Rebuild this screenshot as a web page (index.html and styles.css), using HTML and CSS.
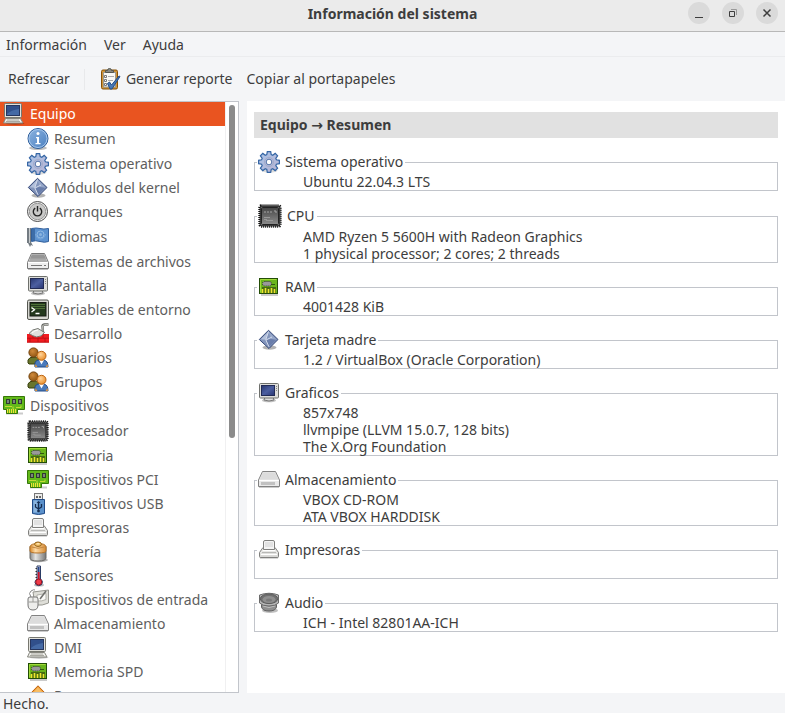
FILE: index.html
```html
<!DOCTYPE html>
<html lang="es">
<head>
<meta charset="utf-8">
<meta name="viewport" content="width=device-width, initial-scale=1">
<title>Información del sistema</title>
<link rel="stylesheet" href="styles.css">
</head>
<body>
<svg class="defs" aria-hidden="true">
  <defs>
    <linearGradient id="g-blue" x1="0" y1="0" x2="1" y2="1"><stop offset="0" stop-color="#8db4e0"/><stop offset="1" stop-color="#4a7fc0"/></linearGradient>
    <linearGradient id="g-navy" x1="0" y1="0" x2="1" y2="1"><stop offset="0" stop-color="#27366f"/><stop offset=".5" stop-color="#4c5fa0"/><stop offset="1" stop-color="#283572"/></linearGradient>
    <linearGradient id="g-grey" x1="0" y1="0" x2="0" y2="1"><stop offset="0" stop-color="#f4f4f2"/><stop offset="1" stop-color="#d4d4d2"/></linearGradient>
    <linearGradient id="g-steel" x1="0" y1="0" x2="1" y2="0"><stop offset="0" stop-color="#8a8a88"/><stop offset=".35" stop-color="#e4e4e2"/><stop offset="1" stop-color="#777"/></linearGradient>
    <linearGradient id="g-cap" x1="0" y1="0" x2="1" y2="0"><stop offset="0" stop-color="#d98a2c"/><stop offset=".35" stop-color="#ffdca6"/><stop offset="1" stop-color="#d58a35"/></linearGradient>
    <linearGradient id="g-gear" x1="0" y1="0" x2="1" y2="1"><stop offset="0" stop-color="#a9c4e8"/><stop offset="1" stop-color="#b9b3d2"/></linearGradient>
    <linearGradient id="g-chip" x1="0" y1="0" x2="0" y2="1"><stop offset="0" stop-color="#464646"/><stop offset="1" stop-color="#8c8c8c"/></linearGradient>
    <radialGradient id="g-orange" cx=".4" cy=".35" r=".7"><stop offset="0" stop-color="#ffd49a"/><stop offset="1" stop-color="#e88a24"/></radialGradient>
    <radialGradient id="g-brown" cx=".4" cy=".35" r=".7"><stop offset="0" stop-color="#d08a3c"/><stop offset="1" stop-color="#8f5410"/></radialGradient>
  </defs>
  <symbol id="computer" viewBox="0 0 22 22">
    <ellipse cx="12" cy="20.500" rx="9.500" ry="1.200" fill="#000" opacity=".25"/>
    <path d="M1.500 1.500q0-1 1-1h15q1 0 1 1v12q0 1-1 1h-15q-1 0-1-1z" fill="#e2e2dc" stroke="#77776f"/>
    <rect x="3.500" y="2.500" width="13" height="10" fill="#456aa5" stroke="#26365f"/>
    <path d="M4 3h12v3q-8 1-12 5z" fill="#31508b"/>
    <path d="M2.500 15.500h15l2.500 4.500H.5z" fill="#efefeb" stroke="#85857d"/>
    <path d="M4 17h12M3 18.500h14" stroke="#aaa9a2"/>
  </symbol>
  <symbol id="info" viewBox="0 0 22 22">
    <ellipse cx="11" cy="20" rx="9" ry="2" fill="#000" opacity=".25"/>
    <circle cx="11" cy="10.500" r="10" fill="url(#g-blue)" stroke="#2d5c98"/>
    <circle cx="11" cy="10.500" r="9" fill="none" stroke="#a8c8ed"/>
    <circle cx="11" cy="5.500" r="1.500" fill="#fff"/><path d="M9 9h3v6h1.500v1.200h-5V15H10v-4.800H9z" fill="#fff"/>
  </symbol>
  <symbol id="gear" viewBox="0 0 22 22">
    <ellipse cx="11.500" cy="19.500" rx="8" ry="2" fill="#000" opacity=".14"/>
    <path d="M9.300.6h3.400l.5 3 1.500.6 2.500-1.800 2.400 2.400-1.800 2.500.6 1.500 3 .5v3.400l-3 .5-.6 1.500 1.800 2.500-2.400 2.400-2.500-1.800-1.500.6-.5 3H9.300l-.5-3-1.500-.6-2.500 1.800-2.400-2.400 1.800-2.500-.6-1.500-3-.5V9.300l3-.5.6-1.500-1.800-2.500 2.400-2.400 2.500 1.800 1.500-.6z" fill="url(#g-gear)" stroke="#3566a5" stroke-width="1.200"/>
    <circle cx="11" cy="11" r="4.500" fill="none" stroke="#a3abc9"/>
    <circle cx="11" cy="11" r="2.800" fill="#fff" stroke="#5674a8"/>
  </symbol>
  <symbol id="module" viewBox="0 0 22 22">
    <ellipse cx="11.500" cy="18.500" rx="7" ry="2.200" fill="#000" opacity=".3"/>
    <path d="M10.500 1.300 20 10.500 11 19.500 1.300 10.500z" fill="#8395bb" stroke="#344878"/>
    <path d="M10.500 2.500 2.800 10.300l5 .5z" fill="#b3c0da"/><path d="M10.500 2.500 18.500 10.500 13 10z" fill="#96a7ca"/><path d="m8 10.800 5-.8 5 1-7 7z" fill="#6a7eab"/><path d="m10.500 2.500-2.700 8.300 3.200 7M8 11l6-3" fill="none" stroke="#d1daeb"/>
  </symbol>
  <symbol id="power" viewBox="0 0 22 22">
    <circle cx="10.500" cy="10.500" r="10" fill="#f1f1f0" stroke="#4d4d4d"/>
    <circle cx="10.500" cy="10.500" r="8.200" fill="#c9c9c8" stroke="#989898"/>
    <path d="M8.200 7.200a4.200 4.200 0 1 0 4.600 0M10.500 5v5.500" fill="none" stroke="#222" stroke-width="1.400"/>
  </symbol>
  <symbol id="flag" viewBox="0 0 22 22">
    <path d="M0 2h4v14l2 4-2-1-1 2-2-4H0z" fill="#737b82"/><path d="M2.500 2v15" stroke="#c6cacc"/>
    <path d="M4.500 2.500q5-1 8.500 0t8.500 0v13q-4 1.500-8.500 0t-8.500 0z" fill="#5c92d0" stroke="#315f9c"/>
    <path d="M5 3h3v12H5z" fill="#28558e" opacity=".6"/>
    <circle cx="13.500" cy="8.500" r="3.500" fill="none" stroke="#93bbe4"/><circle cx="13.500" cy="8.500" r="1.500" fill="#8bb4e0"/><path d="M8.500 8q1 5 5 5t5-5" fill="none" stroke="#79a7da"/>
  </symbol>
  <symbol id="disk" viewBox="0 0 22 22">
    <path d="M1 18.500h20" stroke="#000" opacity=".25"/>
    <path d="M4.500 2.500h13l4 9v6h-21v-6z" fill="#eee" stroke="#777"/>
    <path d="M5 3.500h12l3.500 7.500h-19z" fill="#aaa"/><path d="M5 3.500h12l2 4H3z" fill="#969696"/>
    <path d="M1 11.500h20" stroke="#fff"/><path d="M4 14.500h11M17 14.500h2" stroke="#777"/>
  </symbol>
  <symbol id="display" viewBox="0 0 22 22">
    <ellipse cx="11" cy="18.500" rx="7" ry="1.800" fill="#000" opacity=".25"/>
    <path d="M7 15h8l1 3q-5 2-10 0z" fill="#ddd" stroke="#777"/>
    <rect x="1.500" y="1.500" width="19" height="14.500" rx="1" fill="#dededa" stroke="#6e706c"/>
    <rect x="3.500" y="3.500" width="13" height="10" fill="url(#g-navy)" stroke="#222b55"/>
    <path d="M18.500 4v6" stroke="#888" stroke-dasharray="1 1"/>
  </symbol>
  <symbol id="terminal" viewBox="0 0 22 22">
    <rect x=".5" y="1" width="21" height="19.500" rx="1.500" fill="#d6d6d1" stroke="#555750"/>
    <rect x="3" y="3.500" width="16" height="13.500" fill="#24391d" stroke="#171c15"/>
    <path d="M4 5.500h14M4 7.500h14M4 9.500h14" stroke="#4f7138"/>
    <path d="m4.500 8.500 3 2.200-3 2.200M8.500 14.500h4" fill="none" stroke="#fff" stroke-width="1.300"/>
  </symbol>
  <symbol id="devel" viewBox="0 0 22 22">
    <path d="M0 11h22v8.500H0z" fill="#f01c20"/>
    <path d="M0 15.200h22M0 19.200h22M6 11v4M16 11v4M3 15v4M11 15v4M18 15v4" stroke="#b80c12" stroke-width=".8"/>
    <path d="M16 9.500 15.500 3q.2-1.500 2-1.500h4" fill="none" stroke="#5d5f5a" stroke-width="2.400"/>
    <path d="M2 10.500q3-4.500 9-5l6.500 4q-3 4.500-8 4.500-4-1-7.500-3.500z" fill="#dfe0dc" stroke="#777973"/>
    <path d="m16 8-.3-5q.3-1.300 2-1.300h3.500" fill="none" stroke="#cfcfcb"/><path d="M5 10q3-3 6-3" stroke="#fff" fill="none"/>
  </symbol>
  <symbol id="users" viewBox="0 0 22 22">
    <path d="M1 16v-3q1-3 6-3t5 3v4H2z" fill="#68752d" stroke="#38410f"/>
    <circle cx="6.500" cy="5.500" r="4.600" fill="url(#g-brown)" stroke="#71400a"/>
    <path d="M8 20q-1-6 3-7h6q4 1 4 7z" fill="#4a7abb" stroke="#204a87"/>
    <path d="m12 13 2.500 4.500L17 13z" fill="#fff"/>
    <circle cx="14.500" cy="8.800" r="4.500" fill="url(#g-orange)" stroke="#bd6512"/>
    <path d="m8 20 .5-3 2 3zm13 0-.5-3-2 3z" fill="#e09640"/>
  </symbol>
  <symbol id="card" viewBox="0 0 22 22">
    <path d="M3 18.500h17" stroke="#000" stroke-width="2" opacity=".2"/>
    <path d="M.5 1.500h21v13h-7v4h-11v-4h-3z" fill="#62b91a" stroke="#367708"/>
    <path d="M3 4h4v5H3zM9 4h4v5H9zM15 4h4v5h-4z" fill="#303b32"/>
    <path d="M5 5v3M11 5v3M17 5v3" stroke="#c5d0c2"/>
    <path d="M2 11.500h7M10 11.500v3M13 12.500h5v-2" fill="none" stroke="#c3db35"/>
    <path d="M4.500 14v4M6.500 14v4M8.500 14v4M10.500 14v4M12.500 14v4" stroke="#efe136"/>
  </symbol>
  <symbol id="cpu" viewBox="0 0 24 24">
    <rect x="1.500" y="1.500" width="21" height="21" rx="2" fill="#555" stroke="#111" stroke-width="2.400" stroke-dasharray="1 1"/>
    <rect x="2.500" y="2.500" width="19" height="19" fill="#8a8a8a" stroke="#111" stroke-dasharray="1 1"/>
    <rect x="3.500" y="3.500" width="17" height="17" rx="1" fill="url(#g-chip)" stroke="#222"/>
    <path d="M6 8h2M9 8h2M12 8h2M16 7h2v2" fill="none" stroke="#a5a5a5"/><path d="M6 13.500h6M8 16.500h7M6 15.500h3" stroke="#999"/>
  </symbol>
  <symbol id="memory" viewBox="0 0 22 22">
    <path d="M3 19h17" stroke="#000" stroke-width="2" opacity=".2"/>
    <rect x="1.500" y="2.500" width="18" height="15" fill="#69b51c" stroke="#234d07"/>
    <path d="M2.500 16.500v-13h16" fill="none" stroke="#a0da39"/>
    <path d="M4 11h14v6H4z" fill="#466b12"/><path d="M4.500 13v4M7.500 12v5M10.500 13v4M13.500 12v5M16.500 13v4" stroke="#eee52e" stroke-width="1.600"/>
    <rect x="4.500" y="5.500" width="9" height="4.500" rx="2" fill="#999" stroke="#333" stroke-dasharray="1 1"/><path d="M13 8.500h4" stroke="#30570f"/>
  </symbol>
  <symbol id="usb" viewBox="0 0 22 22">
    <rect x="7.500" y=".5" width="8" height="6" fill="#ececea" stroke="#777"/><path d="M9 3h2v2H9zM12 3h2v2h-2z" fill="#666"/>
    <path d="M5.500 6.500h12v14q-6 2-12 0z" fill="#5b91cb" stroke="#204a87"/><path d="M6.500 7.500h4v12h-4z" fill="#8ab4df"/>
    <path d="M11.500 9v10M8.500 11v3l3 2 3-2v-3" fill="none" stroke="#162d50" stroke-width="1.300"/><path d="m9.500 10 2-2 2 2z" fill="#162d50"/><circle cx="11.500" cy="18" r="1.300" fill="#162d50"/>
  </symbol>
  <symbol id="printer" viewBox="0 0 22 22">
    <path d="M2 18.500h18" stroke="#000" stroke-width="2" opacity=".3"/>
    <path d="M5 8.500h12l3.500 5v4q0 1-1 1h-17q-1 0-1-1v-4z" fill="url(#g-grey)" stroke="#80807e"/>
    <path d="M5.500 10.500V3q0-1.500 1.500-1.500h8q1.500 0 1.500 1.500v7.500z" fill="#f4f4f4" stroke="#80807e"/><path d="M7 3h8v5H7z" fill="#e2e2e2"/>
    <path d="M5 11.500h12" stroke="#fff"/><path d="M4 13.500h14" stroke="#b8b8b6"/><path d="M3 15.500h16" stroke="#fff"/>
  </symbol>
  <symbol id="battery" viewBox="0 0 22 22">
    <ellipse cx="12" cy="19" rx="9" ry="2.200" fill="#000" opacity=".3"/>
    <path d="M3 5.500V17q0 3 8 3t8-3V5.500z" fill="url(#g-steel)" stroke="#6b6b69"/>
    <path d="M3 5.500V10q0 2 8 2t8-2V5.500q-1-3-8-3t-8 3z" fill="url(#g-cap)" stroke="#b5742a"/>
    <path d="M4.500 6q6.500 2.500 13 0" fill="none" stroke="#c68a43"/>
    <ellipse cx="11" cy="3.200" rx="3.400" ry="2.200" fill="#f5c36b" stroke="#8f5c12"/><ellipse cx="11" cy="2.800" rx="1.500" ry=".8" fill="#ffe7b8"/>
  </symbol>
  <symbol id="thermo" viewBox="0 0 22 22">
    <ellipse cx="12" cy="20" rx="5" ry="1.500" fill="#000" opacity=".25"/>
    <path d="M10 1h3.500v13q2 1 2 3.500a3.800 3.800 0 0 1-7.500 0q0-2.500 2-3.500z" fill="#e9e4ee" stroke="#2a3c65"/>
    <path d="M11.700 2v12" stroke="#26478b" stroke-width="1.800"/><path d="M11.700 7v8" stroke="#d3162b" stroke-width="1.800"/><circle cx="11.700" cy="17" r="3" fill="#ef3b48" stroke="#9d1020"/>
    <path d="M8.500 3.500H10M8.500 6.500H10M8.500 9.500H10M8.500 12.500H10" stroke="#333"/>
  </symbol>
  <symbol id="input" viewBox="0 0 22 22">
    <path d="m6 3 15.500-2v13q-6 3-13.500 2z" fill="#deded8" stroke="#96968f"/><path d="m10 6 9-1.500v6q-4 2-9 1.500z" fill="#fafaf7" stroke="#b1b1aa"/>
    <path d="m13 10 6-8" stroke="#70716d" stroke-width="1.600"/><path d="M4 8q-3-4 0-6t4-1" fill="none" stroke="#888"/>
    <path d="M1 10q0-2 2-2h6q2 0 2 2v6q0 5-5 5t-5-5z" fill="#ededeb" stroke="#777"/><path d="M1.500 13h9M6 8v5" stroke="#9d9d99"/>
  </symbol>
  <symbol id="storage" viewBox="0 0 22 22">
    <path d="M1 18.500h20" stroke="#000" opacity=".2"/>
    <path d="M4.500 2.500h13l4 8.500v6.500h-21V11z" fill="#e9e9e9" stroke="#828282"/><path d="M5 3.500h12l3.500 7h-19z" fill="#dcdcdc"/>
    <path d="M1 11.500h20" stroke="#fff"/><path d="M3.500 14.500h14" stroke="#999" stroke-width="3" stroke-dasharray="1 1"/>
  </symbol>
  <symbol id="resources" viewBox="0 0 22 22">
    <path d="m11 .8 9.500 9.700-9.500 9.700-9.500-9.700z" fill="#f0a13c" stroke="#bd5f0c"/><path d="m11 2.500 7.500 8h-15z" fill="#f6bd65"/>
  </symbol>
  <symbol id="audio" viewBox="0 0 22 22">
    <ellipse cx="12" cy="18.500" rx="8" ry="2.500" fill="#000" opacity=".25"/>
    <path d="M3.500 10v5q1 4 7.500 4t7.500-4v-5z" fill="#8f8f8f" stroke="#606060"/><path d="M5 14q6 3 12 0" fill="none" stroke="#c0c0c0"/>
    <path d="M1.500 3q9.500-3.500 19 0v8q-3 3-9.500 3t-9.500-3z" fill="#b5b5b5" stroke="#6b6b6b"/>
    <ellipse cx="11" cy="6.800" rx="8.700" ry="4.800" fill="#707070" stroke="#5c5c5c"/><ellipse cx="11" cy="7.500" rx="6.500" ry="3.500" fill="#8f8f8f"/><ellipse cx="11" cy="8" rx="3" ry="1.600" fill="#7a7a7a"/>
  </symbol>
  <symbol id="report" viewBox="0 0 22 22">
    <rect x="2.500" y="2" width="16" height="19" rx="1.500" fill="#d09437" stroke="#865006"/>
    <rect x="4.500" y="4.500" width="12" height="14.500" fill="#f8f8f5" stroke="#9b9a92"/>
    <path d="M6.500 4.500v-2h2q0-2 2-2t2 2h2v2z" fill="#888984" stroke="#555750"/>
    <path d="M5.500 7.500h2v2h-2zM5.500 11.500h2v2h-2zM5.500 15.500h2v2h-2z" fill="#fff" stroke="#777"/><path d="M9 8.500h6M9 12.500h5M9 16.500h3" stroke="#aaa"/>
    <path d="m8.500 15.500 2-1.500 2 3L20 8l1 .5-8 12.500h-2z" fill="#4778b6" stroke="#244d86"/>
  </symbol>
</svg>

<div class="app">
  <header class="titlebar">
    <h1>Información del sistema</h1>
    <div class="window-buttons">
      <button type="button" aria-label="Minimizar"><svg viewBox="0 0 22 22"><path d="M7 15.500h8"/></svg></button>
      <button type="button" aria-label="Restaurar"><svg viewBox="0 0 22 22"><path class="faint" d="M9 7.500h5.500V13"/><path d="M7.500 9.500h5v5h-5z"/></svg></button>
      <button type="button" aria-label="Cerrar"><svg viewBox="0 0 22 22"><path class="cross" d="m7.500 7.500 7 7m0-7-7 7"/></svg></button>
    </div>
  </header>

  <nav class="menubar" aria-label="Menú">
    <button type="button">Información</button>
    <button type="button">Ver</button>
    <button type="button">Ayuda</button>
  </nav>

  <div class="toolbar" role="toolbar">
    <button type="button">Refrescar</button>
    <span class="separator"></span>
    <button type="button" class="with-icon"><svg class="icon"><use href="#report"/></svg>Generar reporte</button>
    <button type="button">Copiar al portapapeles</button>
  </div>

  <div class="content">
    <aside class="sidebar">
      <nav class="tree" aria-label="Módulos">
        <a class="root selected" href="#"><svg class="icon"><use href="#computer"/></svg>Equipo</a>
        <a class="tall" href="#"><svg class="icon"><use href="#info"/></svg>Resumen</a>
        <a class="tall" href="#"><svg class="icon"><use href="#gear"/></svg>Sistema operativo</a>
        <a href="#"><svg class="icon"><use href="#module"/></svg>Módulos del kernel</a>
        <a href="#"><svg class="icon"><use href="#power"/></svg>Arranques</a>
        <a class="tall" href="#"><svg class="icon"><use href="#flag"/></svg>Idiomas</a>
        <a class="tall" href="#"><svg class="icon"><use href="#disk"/></svg>Sistemas de archivos</a>
        <a href="#"><svg class="icon"><use href="#display"/></svg>Pantalla</a>
        <a href="#"><svg class="icon"><use href="#terminal"/></svg>Variables de entorno</a>
        <a href="#"><svg class="icon"><use href="#devel"/></svg>Desarrollo</a>
        <a href="#"><svg class="icon"><use href="#users"/></svg>Usuarios</a>
        <a href="#"><svg class="icon"><use href="#users"/></svg>Grupos</a>
        <a class="root" href="#"><svg class="icon"><use href="#card"/></svg>Dispositivos</a>
        <a class="taller" href="#"><svg class="icon"><use href="#cpu"/></svg>Procesador</a>
        <a href="#"><svg class="icon"><use href="#memory"/></svg>Memoria</a>
        <a href="#"><svg class="icon"><use href="#card"/></svg>Dispositivos PCI</a>
        <a href="#"><svg class="icon"><use href="#usb"/></svg>Dispositivos USB</a>
        <a href="#"><svg class="icon"><use href="#printer"/></svg>Impresoras</a>
        <a href="#"><svg class="icon"><use href="#battery"/></svg>Batería</a>
        <a href="#"><svg class="icon"><use href="#thermo"/></svg>Sensores</a>
        <a href="#"><svg class="icon"><use href="#input"/></svg>Dispositivos de entrada</a>
        <a href="#"><svg class="icon"><use href="#storage"/></svg>Almacenamiento</a>
        <a href="#"><svg class="icon"><use href="#computer"/></svg>DMI</a>
        <a href="#"><svg class="icon"><use href="#memory"/></svg>Memoria SPD</a>
        <a href="#"><svg class="icon"><use href="#resources"/></svg>Recursos</a>
      </nav>
      <div class="scrollbar"><div class="thumb"></div></div>
    </aside>

    <main class="details">
      <h2>Equipo → Resumen</h2>
      <fieldset>
        <legend><svg class="icon"><use href="#gear"/></svg>Sistema operativo</legend>
        <p>Ubuntu 22.04.3 LTS</p>
      </fieldset>
      <fieldset>
        <legend><svg class="icon large"><use href="#cpu"/></svg>CPU</legend>
        <p>AMD Ryzen 5 5600H with Radeon Graphics</p>
        <p>1 physical processor; 2 cores; 2 threads</p>
      </fieldset>
      <fieldset>
        <legend><svg class="icon"><use href="#memory"/></svg>RAM</legend>
        <p>4001428 KiB</p>
      </fieldset>
      <fieldset>
        <legend><svg class="icon"><use href="#module"/></svg>Tarjeta madre</legend>
        <p>1.2 / VirtualBox (Oracle Corporation)</p>
      </fieldset>
      <fieldset>
        <legend><svg class="icon"><use href="#display"/></svg>Graficos</legend>
        <p>857x748</p>
        <p>llvmpipe (LLVM 15.0.7, 128 bits)</p>
        <p>The X.Org Foundation</p>
      </fieldset>
      <fieldset>
        <legend><svg class="icon"><use href="#storage"/></svg>Almacenamiento</legend>
        <p>VBOX CD-ROM</p>
        <p>ATA VBOX HARDDISK</p>
      </fieldset>
      <fieldset>
        <legend><svg class="icon"><use href="#printer"/></svg>Impresoras</legend>
        <p></p>
      </fieldset>
      <fieldset>
        <legend><svg class="icon"><use href="#audio"/></svg>Audio</legend>
        <p>ICH - Intel 82801AA-ICH</p>
      </fieldset>
    </main>
  </div>

  <footer class="statusbar">Hecho.</footer>
</div>
</body>
</html>
```
FILE: styles.css
```css
* {
  box-sizing: border-box;
}

body {
  margin: 0;
  background: #f4f5f7;
  color: #3d3d3d;
  font: 14px/20px "Noto Sans", "Open Sans", "DejaVu Sans", sans-serif;
}

h1, h2, p, fieldset, legend {
  margin: 0;
  padding: 0;
}

button {
  padding: 0;
  border: 0;
  background: none;
  color: inherit;
  font: inherit;
}

.defs {
  position: absolute;
  width: 0;
  height: 0;
}

.icon {
  flex: none;
  width: 22px;
  height: 22px;
}

.icon.large {
  width: 24px;
  height: 24px;
}

.app {
  display: flex;
  flex-direction: column;
  height: 100vh;
}

/* Title bar */
.titlebar {
  flex: none;
  display: grid;
  grid-template-columns: 1fr auto 1fr;
  height: 32px;
  border-bottom: 1px solid #b8b8b8;
  background: #ebebeb;
}

.titlebar h1 {
  grid-column: 2;
  font-size: 14px;
  line-height: 28px;
}

.window-buttons {
  display: flex;
  justify-content: flex-end;
  gap: 12px;
  padding: 2px 7px 0 0;
}

.window-buttons button {
  width: 22px;
  height: 22px;
  border-radius: 50%;
  background: #dadada;
}

.window-buttons svg {
  display: block;
  fill: none;
  stroke: #3d3d3d;
}

.window-buttons .faint {
  stroke: #999;
}

.window-buttons .cross {
  stroke-width: 1.5;
}

/* Menu and tool bars */
.menubar {
  flex: none;
  display: flex;
  gap: 17px;
  height: 25px;
  padding: 2px 6px 0;
  border-bottom: 1px solid #ebecee;
}

.toolbar {
  flex: none;
  display: flex;
  align-items: center;
  gap: 14px;
  height: 44px;
  padding: 0 8px;
}

.separator {
  width: 1px;
  height: 21px;
  background: #e8e9eb;
}

.with-icon {
  display: flex;
  align-items: center;
  gap: 5px;
}

/* Module tree */
.content {
  flex: 1;
  display: flex;
  gap: 8px;
  min-height: 0;
}

.sidebar {
  flex: none;
  display: flex;
  width: 239px;
  overflow: hidden;
  border: solid #c2c5cb;
  border-width: 1px 1px 1px 0;
  background: #fff;
}

.tree {
  flex: 1;
  display: flex;
  flex-direction: column;
}

.tree a {
  flex: none;
  display: flex;
  align-items: center;
  gap: 5px;
  height: 24px;
  padding-left: 27px;
  color: #5e5e5e;
  text-decoration: none;
}

.tree .root {
  padding-left: 3px;
}

.tree .tall {
  height: 25px;
}

.tree .taller {
  height: 26px;
}

.tree .selected {
  background: #e95420;
  color: #fff;
}

.scrollbar {
  width: 13px;
  padding: 3px 2px 3px 3px;
  border-left: 1px solid #f0f0f1;
}

.thumb {
  width: 6px;
  height: 57%;
  border-radius: 3px;
  background: #8b8b8b;
}

/* Details */
.details {
  flex: 1;
  display: flex;
  flex-direction: column;
  gap: 13px;
  min-width: 0;
  overflow: hidden;
  padding: 11px 7px;
  background: #fff;
}

.details h2 {
  padding: 3px 6px;
  background: #e1e1e1;
  font-size: 14px;
  line-height: 20px;
}

fieldset {
  flex: none;
  min-width: 0;
  border: 1px solid #c2c5cb;
}

legend {
  display: flex;
  align-items: center;
  gap: 5px;
  margin-left: 2px;
  padding: 0 2px 0 1px;
}

fieldset p {
  min-height: 17px;
  padding-left: 48px;
  line-height: 17px;
}

.statusbar {
  flex: none;
  height: 20px;
  padding: 2px 3px 0;
  line-height: 18px;
}
```
